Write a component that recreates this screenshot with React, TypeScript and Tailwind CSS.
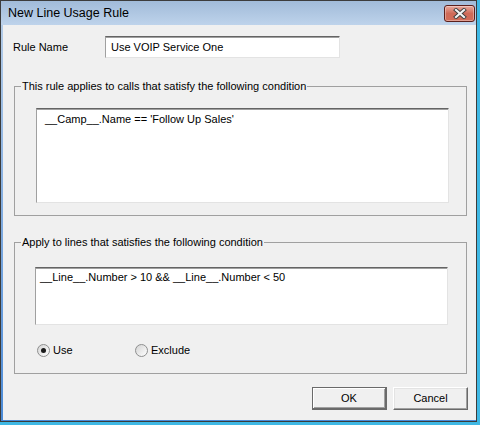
export default function App() {
  const sunken =
    "border border-[#e3e3e3] border-t-[#646464] border-l-[#a0a0a0] shadow-[inset_0_1px_0_#a0a0a0] bg-white";

  return (
    <div className="w-[480px] h-[425px] bg-[#3fb8e4] font-['Liberation_Sans',Arial,sans-serif] text-[11px] leading-[13px] text-black">
      <div className="w-[477px] h-[422px] border border-[#3c3c3c] bg-gradient-to-b from-[#b9cfe8] to-[#4a8ad6] flex flex-col">
        {/* Title bar */}
        <div className="h-[24px] flex items-start shrink-0 bg-gradient-to-b from-[#a1bbd9] to-[#bed3eb]">
          <span className="pl-[7px] pt-[5px] text-[12.5px] leading-[14px] text-black">New Line Usage Rule</span>
          <button className="ml-auto mr-[1px] mt-[4px] w-[31px] h-[17px] rounded-[3px] border border-[#5b1f1b] bg-gradient-to-b from-[#e7a99d] via-[#cf6a58] to-[#d36c58] shadow-[inset_0_0_0_1px_rgba(255,255,255,0.35)] flex items-center justify-center">
            <svg width="16" height="11" viewBox="0 0 16 11">
              <path d="M4 2 L12 9 M12 2 L4 9" stroke="#3d3d3d" strokeWidth="4" strokeLinecap="square" />
              <path d="M4 2 L12 9 M12 2 L4 9" stroke="#f4f4f4" strokeWidth="2.2" strokeLinecap="square" />
            </svg>
          </button>
        </div>

        {/* Client area */}
        <div className="flex-1 ml-[2px] mb-[1px] bg-[#f0f0f0] flex flex-col">
          <div className="mt-[11px] flex items-center">
            <span className="pl-[10px] w-[102px]">Rule Name</span>
            <div className={`w-[235px] h-[22px] pl-[5px] flex items-center ${sunken}`}>Use VOIP Service One</div>
          </div>

          <fieldset className="mt-[22px] ml-[11px] w-[453px] h-[136px] border border-[#a0a0a0]">
            <legend className="ml-[6px] px-[1px] leading-[13px]">This rule applies to calls that satisfy the following condition</legend>
            <div className={`mt-[15px] ml-[21px] w-[413px] h-[95px] pl-[8px] pt-[4px] ${sunken}`}>__Camp__.Name == 'Follow Up Sales'</div>
          </fieldset>

          <fieldset className="mt-[20px] ml-[11px] w-[453px] h-[138px] border border-[#a0a0a0]">
            <legend className="ml-[6px] px-[1px] leading-[13px]">Apply to lines that satisfies the following condition</legend>
            <div className={`mt-[18px] ml-[20px] w-[413px] h-[58px] pl-[4px] pt-[3px] ${sunken}`}>__Line__.Number &gt; 10 &amp;&amp; __Line__.Number &lt; 50</div>
            <div className="mt-[19px] ml-[22px] flex items-center">
              <label className="w-[98px] flex items-center gap-[3px]">
                <span className="w-[13px] h-[13px] rounded-full border border-[#8e8f8f] bg-gradient-to-br from-[#d4d4d4] to-white flex items-center justify-center">
                  <span className="w-[5px] h-[5px] rounded-full bg-[#1a1a1a]" />
                </span>
                Use
              </label>
              <label className="flex items-center gap-[3px]">
                <span className="w-[13px] h-[13px] rounded-full border border-[#8e8f8f] bg-gradient-to-br from-[#d4d4d4] to-white" />
                Exclude
              </label>
            </div>
          </fieldset>

          <div className="mt-[13px] flex justify-end gap-[6px] pr-[8px]">
            <button className="w-[75px] h-[23px] border border-[#6a6a6a] border-b-2 border-r-2 bg-[#f0f0f0] shadow-[inset_1px_1px_0_#ffffff,inset_-1px_-1px_0_#a0a0a0]">OK</button>
            <button className="w-[75px] h-[23px] border border-t-white border-l-white border-r-[#696969] border-b-[#696969] bg-[#f0f0f0] shadow-[inset_-1px_-1px_0_#a0a0a0,inset_1px_1px_0_#e3e3e3]">Cancel</button>
          </div>
        </div>
      </div>
    </div>
  );
}
